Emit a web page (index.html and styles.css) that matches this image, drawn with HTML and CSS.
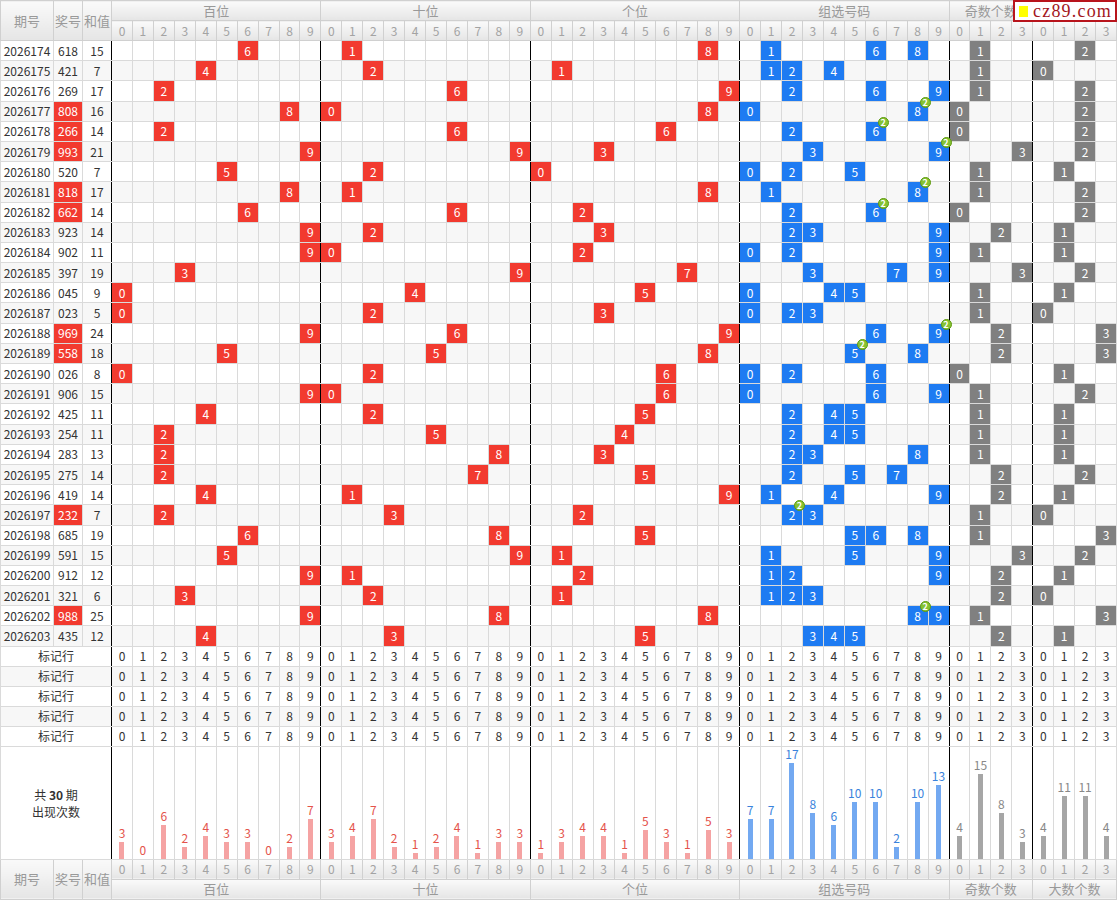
FILE: index.html
```html
<!DOCTYPE html>
<html lang="zh-CN">
<head>
<meta charset="utf-8">
<title>走势图</title>
<link rel="stylesheet" href="styles.css">
</head>
<body>
<div class="wrap">
<div class="logo"><span class="sq"></span><span class="lt">cz89.com</span></div>
<table class="trend">
<colgroup><col class="c1"><col class="c2"><col class="c3"></colgroup>
<thead>
<tr class="h1"><th rowspan="2">期号</th><th rowspan="2">奖号</th><th rowspan="2">和值</th><th colspan="10">百位</th><th colspan="10">十位</th><th colspan="10">个位</th><th colspan="10">组选号码</th><th colspan="4">奇数个数</th><th colspan="4">大数个数</th></tr>
<tr class="h2"><th class="dg">0</th><th class="dg">1</th><th class="dg">2</th><th class="dg">3</th><th class="dg">4</th><th class="dg">5</th><th class="dg">6</th><th class="dg">7</th><th class="dg">8</th><th class="dg">9</th><th class="dg">0</th><th class="dg">1</th><th class="dg">2</th><th class="dg">3</th><th class="dg">4</th><th class="dg">5</th><th class="dg">6</th><th class="dg">7</th><th class="dg">8</th><th class="dg">9</th><th class="dg">0</th><th class="dg">1</th><th class="dg">2</th><th class="dg">3</th><th class="dg">4</th><th class="dg">5</th><th class="dg">6</th><th class="dg">7</th><th class="dg">8</th><th class="dg">9</th><th class="dg">0</th><th class="dg">1</th><th class="dg">2</th><th class="dg">3</th><th class="dg">4</th><th class="dg">5</th><th class="dg">6</th><th class="dg">7</th><th class="dg">8</th><th class="dg">9</th><th class="dg">0</th><th class="dg">1</th><th class="dg">2</th><th class="dg">3</th><th class="dg">0</th><th class="dg">1</th><th class="dg">2</th><th class="dg">3</th></tr>
</thead>
<tbody class="data">
<tr><td>2026174</td><td>618</td><td>15</td>
<td></td><td></td><td></td><td></td><td></td><td></td><td class="r">6</td><td></td><td></td><td></td>
<td></td><td class="r">1</td><td></td><td></td><td></td><td></td><td></td><td></td><td></td><td></td>
<td></td><td></td><td></td><td></td><td></td><td></td><td></td><td></td><td class="r">8</td><td></td>
<td></td><td class="b">1</td><td></td><td></td><td></td><td></td><td class="b">6</td><td></td><td class="b">8</td><td></td>
<td></td><td class="k">1</td><td></td><td></td>
<td></td><td></td><td class="k">2</td><td></td></tr>
<tr class="alt"><td>2026175</td><td>421</td><td>7</td>
<td></td><td></td><td></td><td></td><td class="r">4</td><td></td><td></td><td></td><td></td><td></td>
<td></td><td></td><td class="r">2</td><td></td><td></td><td></td><td></td><td></td><td></td><td></td>
<td></td><td class="r">1</td><td></td><td></td><td></td><td></td><td></td><td></td><td></td><td></td>
<td></td><td class="b">1</td><td class="b">2</td><td></td><td class="b">4</td><td></td><td></td><td></td><td></td><td></td>
<td></td><td class="k">1</td><td></td><td></td>
<td class="k">0</td><td></td><td></td><td></td></tr>
<tr><td>2026176</td><td>269</td><td>17</td>
<td></td><td></td><td class="r">2</td><td></td><td></td><td></td><td></td><td></td><td></td><td></td>
<td></td><td></td><td></td><td></td><td></td><td></td><td class="r">6</td><td></td><td></td><td></td>
<td></td><td></td><td></td><td></td><td></td><td></td><td></td><td></td><td></td><td class="r">9</td>
<td></td><td></td><td class="b">2</td><td></td><td></td><td></td><td class="b">6</td><td></td><td></td><td class="b">9</td>
<td></td><td class="k">1</td><td></td><td></td>
<td></td><td></td><td class="k">2</td><td></td></tr>
<tr class="alt"><td>2026177</td><td class="jr">808</td><td>16</td>
<td></td><td></td><td></td><td></td><td></td><td></td><td></td><td></td><td class="r">8</td><td></td>
<td class="r">0</td><td></td><td></td><td></td><td></td><td></td><td></td><td></td><td></td><td></td>
<td></td><td></td><td></td><td></td><td></td><td></td><td></td><td></td><td class="r">8</td><td></td>
<td class="b">0</td><td></td><td></td><td></td><td></td><td></td><td></td><td></td><td class="b">8<i class="dup">2</i></td><td></td>
<td class="k">0</td><td></td><td></td><td></td>
<td></td><td></td><td class="k">2</td><td></td></tr>
<tr><td>2026178</td><td class="jr">266</td><td>14</td>
<td></td><td></td><td class="r">2</td><td></td><td></td><td></td><td></td><td></td><td></td><td></td>
<td></td><td></td><td></td><td></td><td></td><td></td><td class="r">6</td><td></td><td></td><td></td>
<td></td><td></td><td></td><td></td><td></td><td></td><td class="r">6</td><td></td><td></td><td></td>
<td></td><td></td><td class="b">2</td><td></td><td></td><td></td><td class="b">6<i class="dup">2</i></td><td></td><td></td><td></td>
<td class="k">0</td><td></td><td></td><td></td>
<td></td><td></td><td class="k">2</td><td></td></tr>
<tr class="alt"><td>2026179</td><td class="jr">993</td><td>21</td>
<td></td><td></td><td></td><td></td><td></td><td></td><td></td><td></td><td></td><td class="r">9</td>
<td></td><td></td><td></td><td></td><td></td><td></td><td></td><td></td><td></td><td class="r">9</td>
<td></td><td></td><td></td><td class="r">3</td><td></td><td></td><td></td><td></td><td></td><td></td>
<td></td><td></td><td></td><td class="b">3</td><td></td><td></td><td></td><td></td><td></td><td class="b">9<i class="dup">2</i></td>
<td></td><td></td><td></td><td class="k">3</td>
<td></td><td></td><td class="k">2</td><td></td></tr>
<tr><td>2026180</td><td>520</td><td>7</td>
<td></td><td></td><td></td><td></td><td></td><td class="r">5</td><td></td><td></td><td></td><td></td>
<td></td><td></td><td class="r">2</td><td></td><td></td><td></td><td></td><td></td><td></td><td></td>
<td class="r">0</td><td></td><td></td><td></td><td></td><td></td><td></td><td></td><td></td><td></td>
<td class="b">0</td><td></td><td class="b">2</td><td></td><td></td><td class="b">5</td><td></td><td></td><td></td><td></td>
<td></td><td class="k">1</td><td></td><td></td>
<td></td><td class="k">1</td><td></td><td></td></tr>
<tr class="alt"><td>2026181</td><td class="jr">818</td><td>17</td>
<td></td><td></td><td></td><td></td><td></td><td></td><td></td><td></td><td class="r">8</td><td></td>
<td></td><td class="r">1</td><td></td><td></td><td></td><td></td><td></td><td></td><td></td><td></td>
<td></td><td></td><td></td><td></td><td></td><td></td><td></td><td></td><td class="r">8</td><td></td>
<td></td><td class="b">1</td><td></td><td></td><td></td><td></td><td></td><td></td><td class="b">8<i class="dup">2</i></td><td></td>
<td></td><td class="k">1</td><td></td><td></td>
<td></td><td></td><td class="k">2</td><td></td></tr>
<tr><td>2026182</td><td class="jr">662</td><td>14</td>
<td></td><td></td><td></td><td></td><td></td><td></td><td class="r">6</td><td></td><td></td><td></td>
<td></td><td></td><td></td><td></td><td></td><td></td><td class="r">6</td><td></td><td></td><td></td>
<td></td><td></td><td class="r">2</td><td></td><td></td><td></td><td></td><td></td><td></td><td></td>
<td></td><td></td><td class="b">2</td><td></td><td></td><td></td><td class="b">6<i class="dup">2</i></td><td></td><td></td><td></td>
<td class="k">0</td><td></td><td></td><td></td>
<td></td><td></td><td class="k">2</td><td></td></tr>
<tr class="alt"><td>2026183</td><td>923</td><td>14</td>
<td></td><td></td><td></td><td></td><td></td><td></td><td></td><td></td><td></td><td class="r">9</td>
<td></td><td></td><td class="r">2</td><td></td><td></td><td></td><td></td><td></td><td></td><td></td>
<td></td><td></td><td></td><td class="r">3</td><td></td><td></td><td></td><td></td><td></td><td></td>
<td></td><td></td><td class="b">2</td><td class="b">3</td><td></td><td></td><td></td><td></td><td></td><td class="b">9</td>
<td></td><td></td><td class="k">2</td><td></td>
<td></td><td class="k">1</td><td></td><td></td></tr>
<tr><td>2026184</td><td>902</td><td>11</td>
<td></td><td></td><td></td><td></td><td></td><td></td><td></td><td></td><td></td><td class="r">9</td>
<td class="r">0</td><td></td><td></td><td></td><td></td><td></td><td></td><td></td><td></td><td></td>
<td></td><td></td><td class="r">2</td><td></td><td></td><td></td><td></td><td></td><td></td><td></td>
<td class="b">0</td><td></td><td class="b">2</td><td></td><td></td><td></td><td></td><td></td><td></td><td class="b">9</td>
<td></td><td class="k">1</td><td></td><td></td>
<td></td><td class="k">1</td><td></td><td></td></tr>
<tr class="alt"><td>2026185</td><td>397</td><td>19</td>
<td></td><td></td><td></td><td class="r">3</td><td></td><td></td><td></td><td></td><td></td><td></td>
<td></td><td></td><td></td><td></td><td></td><td></td><td></td><td></td><td></td><td class="r">9</td>
<td></td><td></td><td></td><td></td><td></td><td></td><td></td><td class="r">7</td><td></td><td></td>
<td></td><td></td><td></td><td class="b">3</td><td></td><td></td><td></td><td class="b">7</td><td></td><td class="b">9</td>
<td></td><td></td><td></td><td class="k">3</td>
<td></td><td></td><td class="k">2</td><td></td></tr>
<tr><td>2026186</td><td>045</td><td>9</td>
<td class="r">0</td><td></td><td></td><td></td><td></td><td></td><td></td><td></td><td></td><td></td>
<td></td><td></td><td></td><td></td><td class="r">4</td><td></td><td></td><td></td><td></td><td></td>
<td></td><td></td><td></td><td></td><td></td><td class="r">5</td><td></td><td></td><td></td><td></td>
<td class="b">0</td><td></td><td></td><td></td><td class="b">4</td><td class="b">5</td><td></td><td></td><td></td><td></td>
<td></td><td class="k">1</td><td></td><td></td>
<td></td><td class="k">1</td><td></td><td></td></tr>
<tr class="alt"><td>2026187</td><td>023</td><td>5</td>
<td class="r">0</td><td></td><td></td><td></td><td></td><td></td><td></td><td></td><td></td><td></td>
<td></td><td></td><td class="r">2</td><td></td><td></td><td></td><td></td><td></td><td></td><td></td>
<td></td><td></td><td></td><td class="r">3</td><td></td><td></td><td></td><td></td><td></td><td></td>
<td class="b">0</td><td></td><td class="b">2</td><td class="b">3</td><td></td><td></td><td></td><td></td><td></td><td></td>
<td></td><td class="k">1</td><td></td><td></td>
<td class="k">0</td><td></td><td></td><td></td></tr>
<tr><td>2026188</td><td class="jr">969</td><td>24</td>
<td></td><td></td><td></td><td></td><td></td><td></td><td></td><td></td><td></td><td class="r">9</td>
<td></td><td></td><td></td><td></td><td></td><td></td><td class="r">6</td><td></td><td></td><td></td>
<td></td><td></td><td></td><td></td><td></td><td></td><td></td><td></td><td></td><td class="r">9</td>
<td></td><td></td><td></td><td></td><td></td><td></td><td class="b">6</td><td></td><td></td><td class="b">9<i class="dup">2</i></td>
<td></td><td></td><td class="k">2</td><td></td>
<td></td><td></td><td></td><td class="k">3</td></tr>
<tr class="alt"><td>2026189</td><td class="jr">558</td><td>18</td>
<td></td><td></td><td></td><td></td><td></td><td class="r">5</td><td></td><td></td><td></td><td></td>
<td></td><td></td><td></td><td></td><td></td><td class="r">5</td><td></td><td></td><td></td><td></td>
<td></td><td></td><td></td><td></td><td></td><td></td><td></td><td></td><td class="r">8</td><td></td>
<td></td><td></td><td></td><td></td><td></td><td class="b">5<i class="dup">2</i></td><td></td><td></td><td class="b">8</td><td></td>
<td></td><td></td><td class="k">2</td><td></td>
<td></td><td></td><td></td><td class="k">3</td></tr>
<tr><td>2026190</td><td>026</td><td>8</td>
<td class="r">0</td><td></td><td></td><td></td><td></td><td></td><td></td><td></td><td></td><td></td>
<td></td><td></td><td class="r">2</td><td></td><td></td><td></td><td></td><td></td><td></td><td></td>
<td></td><td></td><td></td><td></td><td></td><td></td><td class="r">6</td><td></td><td></td><td></td>
<td class="b">0</td><td></td><td class="b">2</td><td></td><td></td><td></td><td class="b">6</td><td></td><td></td><td></td>
<td class="k">0</td><td></td><td></td><td></td>
<td></td><td class="k">1</td><td></td><td></td></tr>
<tr class="alt"><td>2026191</td><td>906</td><td>15</td>
<td></td><td></td><td></td><td></td><td></td><td></td><td></td><td></td><td></td><td class="r">9</td>
<td class="r">0</td><td></td><td></td><td></td><td></td><td></td><td></td><td></td><td></td><td></td>
<td></td><td></td><td></td><td></td><td></td><td></td><td class="r">6</td><td></td><td></td><td></td>
<td class="b">0</td><td></td><td></td><td></td><td></td><td></td><td class="b">6</td><td></td><td></td><td class="b">9</td>
<td></td><td class="k">1</td><td></td><td></td>
<td></td><td></td><td class="k">2</td><td></td></tr>
<tr><td>2026192</td><td>425</td><td>11</td>
<td></td><td></td><td></td><td></td><td class="r">4</td><td></td><td></td><td></td><td></td><td></td>
<td></td><td></td><td class="r">2</td><td></td><td></td><td></td><td></td><td></td><td></td><td></td>
<td></td><td></td><td></td><td></td><td></td><td class="r">5</td><td></td><td></td><td></td><td></td>
<td></td><td></td><td class="b">2</td><td></td><td class="b">4</td><td class="b">5</td><td></td><td></td><td></td><td></td>
<td></td><td class="k">1</td><td></td><td></td>
<td></td><td class="k">1</td><td></td><td></td></tr>
<tr class="alt"><td>2026193</td><td>254</td><td>11</td>
<td></td><td></td><td class="r">2</td><td></td><td></td><td></td><td></td><td></td><td></td><td></td>
<td></td><td></td><td></td><td></td><td></td><td class="r">5</td><td></td><td></td><td></td><td></td>
<td></td><td></td><td></td><td></td><td class="r">4</td><td></td><td></td><td></td><td></td><td></td>
<td></td><td></td><td class="b">2</td><td></td><td class="b">4</td><td class="b">5</td><td></td><td></td><td></td><td></td>
<td></td><td class="k">1</td><td></td><td></td>
<td></td><td class="k">1</td><td></td><td></td></tr>
<tr><td>2026194</td><td>283</td><td>13</td>
<td></td><td></td><td class="r">2</td><td></td><td></td><td></td><td></td><td></td><td></td><td></td>
<td></td><td></td><td></td><td></td><td></td><td></td><td></td><td></td><td class="r">8</td><td></td>
<td></td><td></td><td></td><td class="r">3</td><td></td><td></td><td></td><td></td><td></td><td></td>
<td></td><td></td><td class="b">2</td><td class="b">3</td><td></td><td></td><td></td><td></td><td class="b">8</td><td></td>
<td></td><td class="k">1</td><td></td><td></td>
<td></td><td class="k">1</td><td></td><td></td></tr>
<tr class="alt"><td>2026195</td><td>275</td><td>14</td>
<td></td><td></td><td class="r">2</td><td></td><td></td><td></td><td></td><td></td><td></td><td></td>
<td></td><td></td><td></td><td></td><td></td><td></td><td></td><td class="r">7</td><td></td><td></td>
<td></td><td></td><td></td><td></td><td></td><td class="r">5</td><td></td><td></td><td></td><td></td>
<td></td><td></td><td class="b">2</td><td></td><td></td><td class="b">5</td><td></td><td class="b">7</td><td></td><td></td>
<td></td><td></td><td class="k">2</td><td></td>
<td></td><td></td><td class="k">2</td><td></td></tr>
<tr><td>2026196</td><td>419</td><td>14</td>
<td></td><td></td><td></td><td></td><td class="r">4</td><td></td><td></td><td></td><td></td><td></td>
<td></td><td class="r">1</td><td></td><td></td><td></td><td></td><td></td><td></td><td></td><td></td>
<td></td><td></td><td></td><td></td><td></td><td></td><td></td><td></td><td></td><td class="r">9</td>
<td></td><td class="b">1</td><td></td><td></td><td class="b">4</td><td></td><td></td><td></td><td></td><td class="b">9</td>
<td></td><td></td><td class="k">2</td><td></td>
<td></td><td class="k">1</td><td></td><td></td></tr>
<tr class="alt"><td>2026197</td><td class="jr">232</td><td>7</td>
<td></td><td></td><td class="r">2</td><td></td><td></td><td></td><td></td><td></td><td></td><td></td>
<td></td><td></td><td></td><td class="r">3</td><td></td><td></td><td></td><td></td><td></td><td></td>
<td></td><td></td><td class="r">2</td><td></td><td></td><td></td><td></td><td></td><td></td><td></td>
<td></td><td></td><td class="b">2<i class="dup">2</i></td><td class="b">3</td><td></td><td></td><td></td><td></td><td></td><td></td>
<td></td><td class="k">1</td><td></td><td></td>
<td class="k">0</td><td></td><td></td><td></td></tr>
<tr><td>2026198</td><td>685</td><td>19</td>
<td></td><td></td><td></td><td></td><td></td><td></td><td class="r">6</td><td></td><td></td><td></td>
<td></td><td></td><td></td><td></td><td></td><td></td><td></td><td></td><td class="r">8</td><td></td>
<td></td><td></td><td></td><td></td><td></td><td class="r">5</td><td></td><td></td><td></td><td></td>
<td></td><td></td><td></td><td></td><td></td><td class="b">5</td><td class="b">6</td><td></td><td class="b">8</td><td></td>
<td></td><td class="k">1</td><td></td><td></td>
<td></td><td></td><td></td><td class="k">3</td></tr>
<tr class="alt"><td>2026199</td><td>591</td><td>15</td>
<td></td><td></td><td></td><td></td><td></td><td class="r">5</td><td></td><td></td><td></td><td></td>
<td></td><td></td><td></td><td></td><td></td><td></td><td></td><td></td><td></td><td class="r">9</td>
<td></td><td class="r">1</td><td></td><td></td><td></td><td></td><td></td><td></td><td></td><td></td>
<td></td><td class="b">1</td><td></td><td></td><td></td><td class="b">5</td><td></td><td></td><td></td><td class="b">9</td>
<td></td><td></td><td></td><td class="k">3</td>
<td></td><td></td><td class="k">2</td><td></td></tr>
<tr><td>2026200</td><td>912</td><td>12</td>
<td></td><td></td><td></td><td></td><td></td><td></td><td></td><td></td><td></td><td class="r">9</td>
<td></td><td class="r">1</td><td></td><td></td><td></td><td></td><td></td><td></td><td></td><td></td>
<td></td><td></td><td class="r">2</td><td></td><td></td><td></td><td></td><td></td><td></td><td></td>
<td></td><td class="b">1</td><td class="b">2</td><td></td><td></td><td></td><td></td><td></td><td></td><td class="b">9</td>
<td></td><td></td><td class="k">2</td><td></td>
<td></td><td class="k">1</td><td></td><td></td></tr>
<tr class="alt"><td>2026201</td><td>321</td><td>6</td>
<td></td><td></td><td></td><td class="r">3</td><td></td><td></td><td></td><td></td><td></td><td></td>
<td></td><td></td><td class="r">2</td><td></td><td></td><td></td><td></td><td></td><td></td><td></td>
<td></td><td class="r">1</td><td></td><td></td><td></td><td></td><td></td><td></td><td></td><td></td>
<td></td><td class="b">1</td><td class="b">2</td><td class="b">3</td><td></td><td></td><td></td><td></td><td></td><td></td>
<td></td><td></td><td class="k">2</td><td></td>
<td class="k">0</td><td></td><td></td><td></td></tr>
<tr><td>2026202</td><td class="jr">988</td><td>25</td>
<td></td><td></td><td></td><td></td><td></td><td></td><td></td><td></td><td></td><td class="r">9</td>
<td></td><td></td><td></td><td></td><td></td><td></td><td></td><td></td><td class="r">8</td><td></td>
<td></td><td></td><td></td><td></td><td></td><td></td><td></td><td></td><td class="r">8</td><td></td>
<td></td><td></td><td></td><td></td><td></td><td></td><td></td><td></td><td class="b">8<i class="dup">2</i></td><td class="b">9</td>
<td></td><td class="k">1</td><td></td><td></td>
<td></td><td></td><td></td><td class="k">3</td></tr>
<tr class="alt"><td>2026203</td><td>435</td><td>12</td>
<td></td><td></td><td></td><td></td><td class="r">4</td><td></td><td></td><td></td><td></td><td></td>
<td></td><td></td><td></td><td class="r">3</td><td></td><td></td><td></td><td></td><td></td><td></td>
<td></td><td></td><td></td><td></td><td></td><td class="r">5</td><td></td><td></td><td></td><td></td>
<td></td><td></td><td></td><td class="b">3</td><td class="b">4</td><td class="b">5</td><td></td><td></td><td></td><td></td>
<td></td><td></td><td class="k">2</td><td></td>
<td></td><td class="k">1</td><td></td><td></td></tr>
</tbody>
<tbody class="marks">
<tr><td colspan="3">标记行</td><td>0</td><td>1</td><td>2</td><td>3</td><td>4</td><td>5</td><td>6</td><td>7</td><td>8</td><td>9</td><td>0</td><td>1</td><td>2</td><td>3</td><td>4</td><td>5</td><td>6</td><td>7</td><td>8</td><td>9</td><td>0</td><td>1</td><td>2</td><td>3</td><td>4</td><td>5</td><td>6</td><td>7</td><td>8</td><td>9</td><td>0</td><td>1</td><td>2</td><td>3</td><td>4</td><td>5</td><td>6</td><td>7</td><td>8</td><td>9</td><td>0</td><td>1</td><td>2</td><td>3</td><td>0</td><td>1</td><td>2</td><td>3</td></tr>
<tr class="alt"><td colspan="3">标记行</td><td>0</td><td>1</td><td>2</td><td>3</td><td>4</td><td>5</td><td>6</td><td>7</td><td>8</td><td>9</td><td>0</td><td>1</td><td>2</td><td>3</td><td>4</td><td>5</td><td>6</td><td>7</td><td>8</td><td>9</td><td>0</td><td>1</td><td>2</td><td>3</td><td>4</td><td>5</td><td>6</td><td>7</td><td>8</td><td>9</td><td>0</td><td>1</td><td>2</td><td>3</td><td>4</td><td>5</td><td>6</td><td>7</td><td>8</td><td>9</td><td>0</td><td>1</td><td>2</td><td>3</td><td>0</td><td>1</td><td>2</td><td>3</td></tr>
<tr><td colspan="3">标记行</td><td>0</td><td>1</td><td>2</td><td>3</td><td>4</td><td>5</td><td>6</td><td>7</td><td>8</td><td>9</td><td>0</td><td>1</td><td>2</td><td>3</td><td>4</td><td>5</td><td>6</td><td>7</td><td>8</td><td>9</td><td>0</td><td>1</td><td>2</td><td>3</td><td>4</td><td>5</td><td>6</td><td>7</td><td>8</td><td>9</td><td>0</td><td>1</td><td>2</td><td>3</td><td>4</td><td>5</td><td>6</td><td>7</td><td>8</td><td>9</td><td>0</td><td>1</td><td>2</td><td>3</td><td>0</td><td>1</td><td>2</td><td>3</td></tr>
<tr class="alt"><td colspan="3">标记行</td><td>0</td><td>1</td><td>2</td><td>3</td><td>4</td><td>5</td><td>6</td><td>7</td><td>8</td><td>9</td><td>0</td><td>1</td><td>2</td><td>3</td><td>4</td><td>5</td><td>6</td><td>7</td><td>8</td><td>9</td><td>0</td><td>1</td><td>2</td><td>3</td><td>4</td><td>5</td><td>6</td><td>7</td><td>8</td><td>9</td><td>0</td><td>1</td><td>2</td><td>3</td><td>4</td><td>5</td><td>6</td><td>7</td><td>8</td><td>9</td><td>0</td><td>1</td><td>2</td><td>3</td><td>0</td><td>1</td><td>2</td><td>3</td></tr>
<tr><td colspan="3">标记行</td><td>0</td><td>1</td><td>2</td><td>3</td><td>4</td><td>5</td><td>6</td><td>7</td><td>8</td><td>9</td><td>0</td><td>1</td><td>2</td><td>3</td><td>4</td><td>5</td><td>6</td><td>7</td><td>8</td><td>9</td><td>0</td><td>1</td><td>2</td><td>3</td><td>4</td><td>5</td><td>6</td><td>7</td><td>8</td><td>9</td><td>0</td><td>1</td><td>2</td><td>3</td><td>4</td><td>5</td><td>6</td><td>7</td><td>8</td><td>9</td><td>0</td><td>1</td><td>2</td><td>3</td><td>0</td><td>1</td><td>2</td><td>3</td></tr>
</tbody>
<tbody class="stats">
<tr><td colspan="3" class="lbl">共 <b>30</b> 期<br>出现次数</td>
<td class="sr"><span>3</span><em style="height:17px"></em></td><td class="sr"><span>0</span></td><td class="sr"><span>6</span><em style="height:33.9px"></em></td><td class="sr"><span>2</span><em style="height:11.3px"></em></td><td class="sr"><span>4</span><em style="height:22.6px"></em></td><td class="sr"><span>3</span><em style="height:17px"></em></td><td class="sr"><span>3</span><em style="height:17px"></em></td><td class="sr"><span>0</span></td><td class="sr"><span>2</span><em style="height:11.3px"></em></td><td class="sr"><span>7</span><em style="height:39.6px"></em></td>
<td class="sr"><span>3</span><em style="height:17px"></em></td><td class="sr"><span>4</span><em style="height:22.6px"></em></td><td class="sr"><span>7</span><em style="height:39.6px"></em></td><td class="sr"><span>2</span><em style="height:11.3px"></em></td><td class="sr"><span>1</span><em style="height:5.7px"></em></td><td class="sr"><span>2</span><em style="height:11.3px"></em></td><td class="sr"><span>4</span><em style="height:22.6px"></em></td><td class="sr"><span>1</span><em style="height:5.7px"></em></td><td class="sr"><span>3</span><em style="height:17px"></em></td><td class="sr"><span>3</span><em style="height:17px"></em></td>
<td class="sr"><span>1</span><em style="height:5.7px"></em></td><td class="sr"><span>3</span><em style="height:17px"></em></td><td class="sr"><span>4</span><em style="height:22.6px"></em></td><td class="sr"><span>4</span><em style="height:22.6px"></em></td><td class="sr"><span>1</span><em style="height:5.7px"></em></td><td class="sr"><span>5</span><em style="height:28.3px"></em></td><td class="sr"><span>3</span><em style="height:17px"></em></td><td class="sr"><span>1</span><em style="height:5.7px"></em></td><td class="sr"><span>5</span><em style="height:28.3px"></em></td><td class="sr"><span>3</span><em style="height:17px"></em></td>
<td class="sb"><span>7</span><em style="height:39.6px"></em></td><td class="sb"><span>7</span><em style="height:39.6px"></em></td><td class="sb"><span>17</span><em style="height:96px"></em></td><td class="sb"><span>8</span><em style="height:45.2px"></em></td><td class="sb"><span>6</span><em style="height:33.9px"></em></td><td class="sb"><span>10</span><em style="height:56.5px"></em></td><td class="sb"><span>10</span><em style="height:56.5px"></em></td><td class="sb"><span>2</span><em style="height:11.3px"></em></td><td class="sb"><span>10</span><em style="height:56.5px"></em></td><td class="sb"><span>13</span><em style="height:73.5px"></em></td>
<td class="sg"><span>4</span><em style="height:22.6px"></em></td><td class="sg"><span>15</span><em style="height:84.8px"></em></td><td class="sg"><span>8</span><em style="height:45.2px"></em></td><td class="sg"><span>3</span><em style="height:17px"></em></td>
<td class="sg"><span>4</span><em style="height:22.6px"></em></td><td class="sg"><span>11</span><em style="height:62.2px"></em></td><td class="sg"><span>11</span><em style="height:62.2px"></em></td><td class="sg"><span>4</span><em style="height:22.6px"></em></td></tr>
</tbody>
<tfoot>
<tr class="h2"><th rowspan="2">期号</th><th rowspan="2">奖号</th><th rowspan="2">和值</th><th class="dg">0</th><th class="dg">1</th><th class="dg">2</th><th class="dg">3</th><th class="dg">4</th><th class="dg">5</th><th class="dg">6</th><th class="dg">7</th><th class="dg">8</th><th class="dg">9</th><th class="dg">0</th><th class="dg">1</th><th class="dg">2</th><th class="dg">3</th><th class="dg">4</th><th class="dg">5</th><th class="dg">6</th><th class="dg">7</th><th class="dg">8</th><th class="dg">9</th><th class="dg">0</th><th class="dg">1</th><th class="dg">2</th><th class="dg">3</th><th class="dg">4</th><th class="dg">5</th><th class="dg">6</th><th class="dg">7</th><th class="dg">8</th><th class="dg">9</th><th class="dg">0</th><th class="dg">1</th><th class="dg">2</th><th class="dg">3</th><th class="dg">4</th><th class="dg">5</th><th class="dg">6</th><th class="dg">7</th><th class="dg">8</th><th class="dg">9</th><th class="dg">0</th><th class="dg">1</th><th class="dg">2</th><th class="dg">3</th><th class="dg">0</th><th class="dg">1</th><th class="dg">2</th><th class="dg">3</th></tr>
<tr class="h1"><th colspan="10">百位</th><th colspan="10">十位</th><th colspan="10">个位</th><th colspan="10">组选号码</th><th colspan="4">奇数个数</th><th colspan="4">大数个数</th></tr>
</tfoot>
</table>
</div>
</body>
</html>
```

FILE: styles.css
```css
html, body {
  margin: 0;
  padding: 0;
  background: #fff;
}
body {
  font-family: "Noto Sans CJK SC", "Noto Sans", sans-serif;
  font-size: 12px;
  color: #333;
}
.wrap {
  position: relative;
  width: 1117px;
  overflow: hidden;
}
.trend {
  width: 1117px;
  table-layout: fixed;
  border-collapse: collapse;
}
.trend col.c1 { width: 53px; }
.trend col.c2 { width: 29px; }
.trend col.c3 { width: 29px; }
.trend td, .trend th {
  border: 1px solid #dadada;
  padding: 0;
  text-align: center;
  white-space: nowrap;
  line-height: 16px;
}
.trend th {
  background: linear-gradient(#fafafa, #e5e5e5);
  border-color: #d0d0d0;
  color: #999;
  font-weight: normal;
  font-size: 13px;
}
.trend th.dg {
  font-size: 12px;
  color: #a3a3a3;
}
.trend tr.h1, .trend tr.h2 { height: 20px; }
.data tr { height: 20.2px; }
.marks tr { height: 20px; }
.data tr.alt td, .marks tr.alt td { background: #f7f7f7; }

/* group separators */
.data td:nth-child(3), .data td:nth-child(13), .data td:nth-child(23),
.data td:nth-child(33), .data td:nth-child(43), .data td:nth-child(47) {
  border-right-color: #000;
}
.data td:nth-child(4), .data td:nth-child(14), .data td:nth-child(24),
.data td:nth-child(34), .data td:nth-child(44), .data td:nth-child(48) {
  border-left-color: #000;
}
.marks td:nth-child(1), .marks td:nth-child(11), .marks td:nth-child(21),
.marks td:nth-child(31), .marks td:nth-child(41), .marks td:nth-child(45),
.stats td:nth-child(1), .stats td:nth-child(11), .stats td:nth-child(21),
.stats td:nth-child(31), .stats td:nth-child(41), .stats td:nth-child(45) {
  border-right-color: #000;
}
.marks td:nth-child(2), .marks td:nth-child(12), .marks td:nth-child(22),
.marks td:nth-child(32), .marks td:nth-child(42), .marks td:nth-child(46),
.stats td:nth-child(2), .stats td:nth-child(12), .stats td:nth-child(22),
.stats td:nth-child(32), .stats td:nth-child(42), .stats td:nth-child(46) {
  border-left-color: #000;
}

/* highlighted cells */
.data tr td.r, .data tr td.jr { background: #f23a2f; color: #fff; }
.data tr td.b { background: #1e7bf2; color: #fff; position: relative; }
.data tr td.k { background: #808080; color: #fff; }
.dup {
  position: absolute;
  top: -5px;
  right: -3px;
  width: 9px;
  height: 9px;
  border: 1px solid #5f9a0e;
  border-radius: 50%;
  background: #86c232;
  color: #fff;
  font-style: normal;
  font-size: 9px;
  font-weight: bold;
  line-height: 9px;
  text-align: center;
  z-index: 2;
}

/* stats */
.stats tr { height: 113px; }
.stats td { vertical-align: bottom; }
.stats td.lbl {
  vertical-align: middle;
  line-height: 17px;
  color: #333;
}
.stats td.lbl b { font-weight: bold; }
.stats td span {
  display: block;
  line-height: 14px;
  margin-bottom: 2px;
}
.stats td em {
  display: block;
  width: 5px;
  margin: 0 auto;
}
.stats td.sr span { color: #e4534b; }
.stats td.sr em { background: #f5a3a3; }
.stats td.sb span { color: #3a83dc; }
.stats td.sb em { background: #73a9f1; }
.stats td.sg span { color: #888; }
.stats td.sg em { background: #a6a6a6; }

/* logo */
.logo {
  position: absolute;
  top: 0;
  left: 1013px;
  width: 104px;
  height: 22px;
  box-sizing: border-box;
  border: 2px solid #b8141c;
  background: #fff;
  display: flex;
  align-items: center;
  padding-left: 4px;
  gap: 5px;
  z-index: 5;
}
.logo .sq {
  width: 9px;
  height: 11px;
  background: #ffff00;
}
.logo .lt {
  font-family: "Liberation Serif", serif;
  font-size: 18px;
  line-height: 18px;
  color: #a3161c;
  letter-spacing: 1.2px;
}
```
